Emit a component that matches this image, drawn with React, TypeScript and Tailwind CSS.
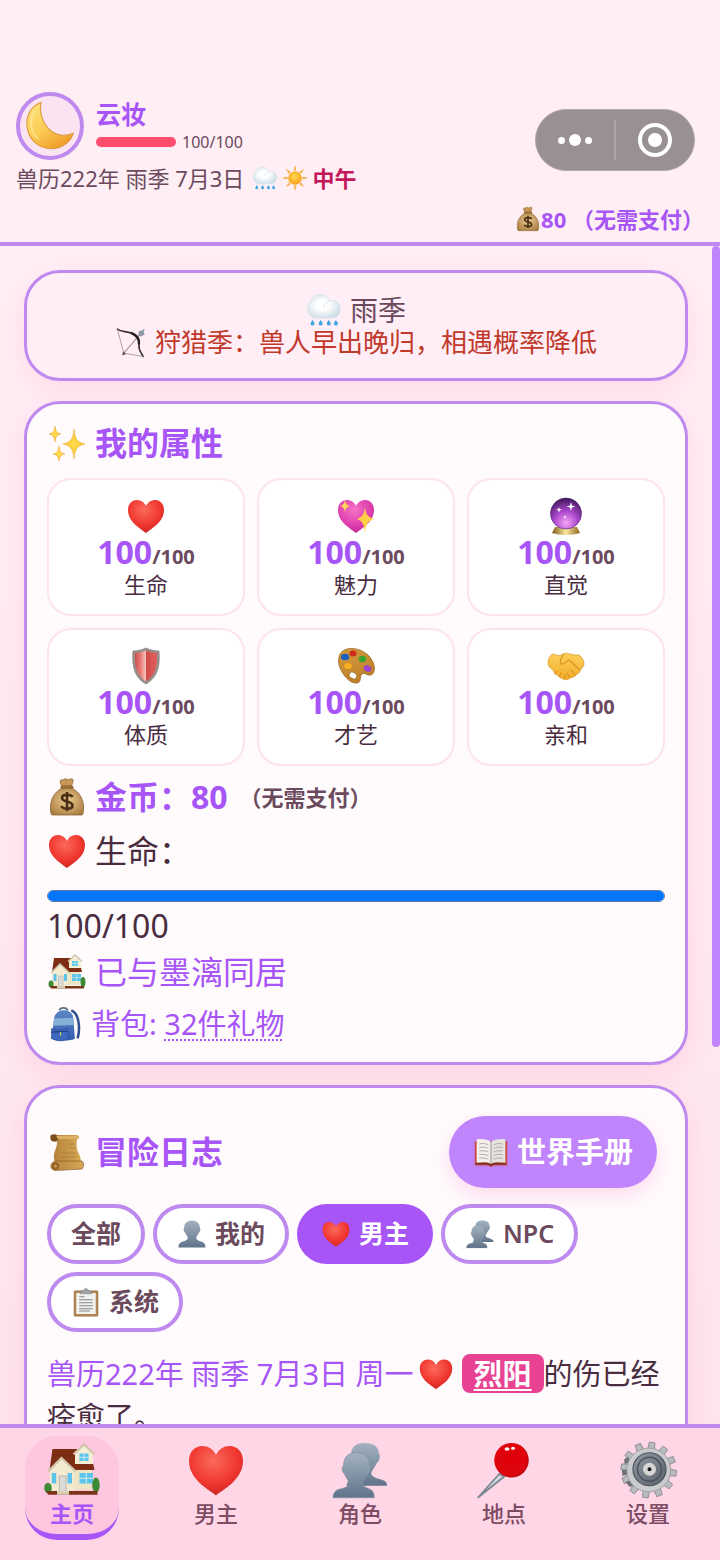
import { useState } from 'react';
import type { ReactNode } from 'react';

type IconName =
  | 'moon' | 'rain' | 'sun' | 'money' | 'bow' | 'sparkles' | 'heart' | 'charm' | 'crystal'
  | 'shield' | 'palette' | 'handshake' | 'house' | 'backpack' | 'scroll' | 'book'
  | 'person' | 'people' | 'clipboard' | 'pin' | 'gear';

const GEAR_TEETH = [0, 30, 60, 90, 120, 150, 180, 210, 240, 270, 300, 330];

// All drawings share a 40x40 box
const drawings: Record<IconName, ReactNode> = {
  moon: (
    <>
      <path d="M13 2C5 5 1 13 2.500 21.500C4 31.500 12.500 38 22 37.500C30 37 36 32 38 25.500C30 29 22 26.500 17.500 20.500C13.500 15 12 8 13 2Z" fill="url(#g-moon)" stroke="#d99a3c" strokeWidth="0.800" />
      <path d="M8 9C4 16 5 25 11 30" fill="none" stroke="#fff3b0" strokeWidth="1.500" opacity="0.500" strokeLinecap="round" />
    </>
  ),
  rain: (
    <>
      <path d="M12 29C6 29 2 25 2 19C2 15 3 12 5 10C7 5 11 3 16 3C22 3 25 6 26 10C33 8 38 12 38 19C38 25 34 29 28 29Z" fill="url(#g-cloud)" stroke="#d3dfe6" strokeWidth="0.700" />
      <path d="M26 10C22 11 20 14 20 17" fill="none" stroke="#cfdce4" strokeWidth="1" />
      <g fill="#3ea6e0">
        <path d="M7 31C9 33 9.500 34 9.500 35.500A2.300 2.300 0 0 1 5 35.500C5 34 6 33 7 31Z" />
        <path d="M16 31C18 33 18.500 34 18.500 35.500A2.300 2.300 0 0 1 14 35.500C14 34 15 33 16 31Z" />
        <path d="M25 31C27 33 27.500 34 27.500 35.500A2.300 2.300 0 0 1 23 35.500C23 34 24 33 25 31Z" />
        <path d="M33 31C35 33 35.500 34 35.500 35.500A2.300 2.300 0 0 1 31 35.500C31 34 32 33 33 31Z" />
      </g>
    </>
  ),
  sun: (
    <>
      {[0, 45, 90, 135, 180, 225, 270, 315].map((a) => (
        <path key={a} d="M20 1.500L21.500 8H18.500Z" fill="#f2a93b" stroke="#f2a93b" strokeWidth="0.800" transform={`rotate(${a} 20 20)`} />
      ))}
      <circle cx="20" cy="20" r="10.500" fill="url(#g-sun)" />
    </>
  ),
  money: (
    <>
      <path d="M15 9C12 5 13 2 16 3C18 1 20 2 21 3C24 1 27 2 26 4C26 6 25 7 24.500 9Z" fill="#c69757" stroke="#8b6231" strokeWidth="0.800" />
      <path d="M15 11C8 15 4 21 3.500 29C3.500 33 3.500 37 5 38H35C36.500 37 36.500 33 36.500 29C36 21 32 15 25 11Z" fill="url(#g-bag)" stroke="#8b6231" strokeWidth="0.800" />
      <rect x="13.500" y="8.500" width="13" height="3.500" rx="1.700" fill="#9c6e37" />
      <path d="M25.500 20C24.500 17.500 15 16.500 15 21C15 25.500 25.500 23.500 25.500 28.500C25.500 33 15.500 32.500 14.500 29M20 15V34" fill="none" stroke="#4a3014" strokeWidth="2.600" />
    </>
  ),
  bow: (
    <>
      <path d="M3 4C8 8 14 6 21 9C29 12 31 18 30 24C29 30 33 33 35 38" fill="none" stroke="#3b302e" strokeWidth="2" strokeLinecap="round" />
      <path d="M3 4L11 34L35 38" fill="none" stroke="#8b8583" strokeWidth="0.900" />
      <path d="M11 34L34 7" stroke="#7b6d68" strokeWidth="1.200" />
      <path d="M29 12L30 6L33 6L37 3L36 8L37 11L32 13Z" fill="#909aa5" />
      <path d="M9 37L10 32L14 35Z" fill="#58504d" />
      <path d="M20 8.500C27 11 31 17 30 23" fill="none" stroke="#201b1a" strokeWidth="3" />
    </>
  ),
  sparkles: (
    <g fill="url(#g-spark)" stroke="#eaa531" strokeWidth="0.500">
      <path d="M27 6C28 16 30 19 38 21C30 23 28 26 27 36C26 26 24 23 16 21C24 19 26 16 27 6Z" />
      <path d="M8 3C9 9 10 10 14 11C10 12 9 13 8 19C7 13 6 12 2 11C6 10 7 9 8 3Z" />
      <path d="M12 23C13 29 14 30 18 31C14 32 13 33 12 38C11 33 10 32 6 31C10 30 11 29 12 23Z" />
    </g>
  ),
  heart: (
    <path d="M20 37C17 34 2 27 2 14C2 2 16 1 20 10C24 1 38 2 38 14C38 27 23 34 20 37Z" fill="url(#g-heart)" />
  ),
  charm: (
    <>
      <path d="M20 37C17 34 2 27 2 14C2 2 16 1 20 10C24 1 38 2 38 14C38 27 23 34 20 37Z" fill="url(#g-pink)" />
      <path d="M9 3.500C9.500 8 11 9 14 10C11 11 9.500 12 9 16.500C8.500 12 7 11 4 10C7 9 8.500 8 9 3.500Z" fill="#ffd45a" />
      <path d="M29 11C30 19 32 21 38 23C32 25 30 27 29 37C28 27 26 25 21 23C26 21 28 19 29 11Z" fill="#ffcf45" />
    </>
  ),
  crystal: (
    <>
      <path d="M9 31H31L34 37C27 39.500 13 39.500 6 37Z" fill="url(#g-gold)" />
      <circle cx="20" cy="17.500" r="15.500" fill="url(#g-crystal)" stroke="#4b1c6a" strokeWidth="0.600" />
      <path d="M25 6L26 9.500L29.500 10.500L26 11.500L25 15L24 11.500L20.500 10.500L24 9.500Z" fill="#ffffff" />
      <path d="M13 11L13.700 13L16 13.700L13.700 14.400L13 16.500L12.300 14.400L10 13.700L12.300 13Z" fill="#ffffff" />
      <circle cx="19" cy="21" r="1" fill="#ffffff" />
    </>
  ),
  shield: (
    <>
      <path d="M20 2C16 4 11 5 7 5C6 17 7 31 20 38C33 31 34 17 33 5C29 5 24 4 20 2Z" fill="#96908e" stroke="#7a7472" strokeWidth="0.600" />
      <path d="M20 4.500C16 6 12.500 7 9 7C8.500 18 9.500 29 20 35.500Z" fill="url(#g-shieldl)" />
      <path d="M20 4.500C24 6 27.500 7 31 7C31.500 18 30.500 29 20 35.500Z" fill="url(#g-shieldr)" />
    </>
  ),
  palette: (
    <>
      <path d="M4 8C9 0 23 1 32 9C40 17 40 27 35 29C31 30 29 26 26 28C23 31 26 36 21 37C14 38 7 29 4 22C2 17 2 12 4 8Z" fill="url(#g-palette)" stroke="#8f5c14" strokeWidth="0.700" />
      <ellipse cx="17" cy="29.500" rx="4.200" ry="3.200" fill="#ffffff" stroke="#8f5c14" strokeWidth="0.700" transform="rotate(35 17 29.500)" />
      <ellipse cx="9" cy="11" rx="4.200" ry="3.200" fill="#1e5fc0" />
      <ellipse cx="17" cy="7.500" rx="3.400" ry="3" fill="#cf2a1e" />
      <ellipse cx="26.500" cy="13" rx="3.600" ry="3.200" fill="#37a22c" />
      <ellipse cx="12" cy="20" rx="3.800" ry="3" fill="#f5b01e" />
      <ellipse cx="31.500" cy="22.500" rx="4" ry="3.200" fill="#9b45cc" transform="rotate(30 31.500 22.500)" />
    </>
  ),
  handshake: (
    <g stroke="#d9951f" strokeWidth="0.700" strokeLinejoin="round">
      <path d="M2 16C3 11 5 8 8 8C11 10 14 10 17 8C19 7 22 7 24 8C27 9 30 9 33 9C36 11 38 15 38 18C38 21 35 22 34 25C33 28 30 28 29 30C27 32 25 31 24 32C22 34 20 34 18 33C16 33 14 32 13 30C10 29 8 27 7 24C4 22 2 20 2 16Z" fill="url(#g-hand)" />
      <path d="M18 8C15 12 13 15 15 18C18 19 20 15 23 14C27 18 31 21 34 24" fill="none" strokeWidth="1.200" />
      <path d="M11 25L9 28M15 27L13 31M19 29L18 33M25 24L29 29M21 27L24 31" fill="none" strokeWidth="1.200" strokeLinecap="round" />
    </g>
  ),
  house: (
    <>
      <path d="M8 33V19L16 10H33V33Z" fill="#eee5c4" />
      <path d="M7 6H32L35 20H20L13 12L5 20Z" fill="#7d2d14" />
      <path d="M5 20L13 12L21 20V34H5Z" fill="#f3ead0" />
      <path d="M4 21L13 12L22.500 21" fill="none" stroke="#cfc6ad" strokeWidth="1.500" />
      <path d="M22 9L28 3.500L34 9V16H22Z" fill="#f5edd5" />
      <path d="M21 9.500L28 3L35 9.500" fill="none" stroke="#cfc6ad" strokeWidth="1.400" />
      <g fill="#5cc4e8">
        <rect x="25" y="9" width="6" height="5" />
        <rect x="25" y="22" width="9" height="7" />
        <rect x="6.500" y="22" width="3" height="7" />
        <rect x="17" y="22" width="3" height="7" />
      </g>
      <path d="M28 9V14M25 11.500H31M29.500 22V29M25 25.500H34" stroke="#d8f0f2" strokeWidth="0.600" />
      <rect x="11.500" y="24" width="4.500" height="11" fill="#dcdad6" stroke="#b5b2aa" strokeWidth="0.600" />
      <ellipse cx="4" cy="32" rx="2.500" ry="3.500" fill="#3d8a35" />
      <ellipse cx="36" cy="30" rx="2.500" ry="5" fill="#3d8a35" />
      <path d="M3 34H37V36.500H4Z" fill="#7b3418" />
      <rect x="10" y="34" width="8" height="2.500" fill="#d9cdb4" />
    </>
  ),
  backpack: (
    <>
      <path d="M27 5C36 8 37 26 34 36" fill="none" stroke="#324f8e" strokeWidth="2.800" />
      <path d="M14 5C14 1 22 1 23 5" fill="none" stroke="#5c7188" strokeWidth="2" />
      <path d="M8 13C10 2 27 2 29 12L31 36C28 39 10 39 5 36Z" fill="url(#g-pack)" />
      <path d="M8 14L29 13L30 21L7 22Z" fill="#86afd6" />
      <path d="M5 25C13 28 18 27 23 24L24 36C18 40 10 39 5 36Z" fill="#3e68bd" stroke="#294a8e" strokeWidth="0.700" />
      <path d="M5 29L23 28" stroke="#23407c" strokeWidth="1.200" />
      <path d="M15 29V33" stroke="#e2c368" strokeWidth="1.200" />
    </>
  ),
  scroll: (
    <>
      <path d="M6 3H31C29 10 29 17 32 22C34 26 34 29 33 31H9C4 25 9 18 10 12C10 9 9 6 6 5Z" fill="url(#g-scroll)" />
      <path d="M4 3C8 1 11 3 11 6C11 9 8 11 5 9C3 8 3 4 4 3Z" fill="#77501d" />
      <path d="M9 4H32V7H11Z" fill="#dcb065" />
      <path d="M8 29H35C37 31 37 35 35 37L8 38.500C2 37 3 31 8 29Z" fill="url(#g-scroll)" stroke="#8a5f24" strokeWidth="0.700" />
      <circle cx="8.500" cy="34" r="3.600" fill="#8f6124" />
      <circle cx="8.500" cy="34" r="1.600" fill="#cf9f50" />
      <path d="M22 12H27M22 16H28M14 21H29M15 25H29" stroke="#a6783a" strokeWidth="0.700" />
    </>
  ),
  book: (
    <>
      <path d="M2 8H38V35H23C22 37 18 37 17 35H2Z" fill="#c9473a" />
      <path d="M3 32H18C19 34 21 34 22 32H37V34H23L20 35.500L17 34H3Z" fill="#6f3028" />
      <path d="M4 6C10 5 17 6 20 9V33C16 31 10 31 4 32Z" fill="#f2efec" />
      <path d="M36 6C30 5 23 6 20 9V33C24 31 30 31 36 32Z" fill="#e6e2de" />
      <path d="M20 9V33" stroke="#a19b96" strokeWidth="1.200" />
      <path d="M7 11C11 10 15 11 17 12M7 15C11 14 15 15 17 16M7 19C11 18 15 19 17 20M7 23C11 22 15 23 17 24M7 27C11 26 15 27 17 28M33 11C29 10 25 11 23 12M33 15C29 14 25 15 23 16M33 19C29 18 25 19 23 20M33 23C29 22 25 23 23 24M33 27C29 26 25 27 23 28" fill="none" stroke="#aaa5a0" strokeWidth="1" />
    </>
  ),
  person: (
    <path d="M20 2C27 2 30.500 6 30.500 12C32 13 31 17 29.500 18C28 21 26 23 25.500 25C26 28 29 29 32 30C36 31 38 33 38 38H2C2 33 4 31 8 30C11 29 14 28 14.500 25C14 23 12 21 10.500 18C9 17 8 13 9.500 12C9.500 6 13 2 20 2Z" fill="url(#g-person)" />
  ),
  people: (
    <>
      <path d="M23 2C29 2 32.500 4.500 32.500 9C34 10 33 14 31.500 15C30 18 28 20 27.500 22C27.500 25 32 25.500 34.500 26.500C37 27.500 38 28 38 30.500H11C11 28 14 26 17 25L14 10C14 5 17 2 23 2Z" fill="url(#g-person)" />
      <path d="M17.500 8.500C23 8.500 26.500 11.500 26.500 17C28 18 27 21.500 25.500 22.500C24 25.500 22 27 22 29C22 31.500 25 32 27 33C29 34 29.500 36 29.500 38.500H2C2 36 3 34 5.500 33C9 32 12.500 31.500 12.500 29C12.500 27 11 25.500 9.500 22.500C8 21.500 7.500 18 9 17C9 11.500 12 8.500 17.500 8.500Z" fill="url(#g-person)" stroke="#7b8d9f" strokeWidth="0.400" />
    </>
  ),
  clipboard: (
    <>
      <rect x="4" y="5" width="32" height="34" rx="1.500" fill="#b38653" stroke="#8a6338" strokeWidth="0.600" />
      <rect x="7" y="8" width="26" height="28" fill="#f1f1ef" />
      <path d="M12 9L14 5H17C17 1 23 1 23 5H26L28 9Z" fill="#9da3a6" stroke="#73797c" strokeWidth="0.600" />
      <path d="M11 13H18M11 17H29M11 21H29M11 25H29M11 29H29M11 32H25" stroke="#7d8285" strokeWidth="1.300" />
    </>
  ),
  pin: (
    <>
      <path d="M17 22.500L2.500 38.500L20 24.500Z" fill="#d2d7dc" stroke="#7b8794" strokeWidth="1.200" />
      <circle cx="25" cy="13.500" r="11.500" fill="url(#g-pin)" />
      <ellipse cx="22" cy="6" rx="1.600" ry="1.200" fill="#ffffff" />
      <ellipse cx="26" cy="5.500" rx="1.300" ry="1" fill="#ffffff" />
    </>
  ),
  gear: (
    <>
      {GEAR_TEETH.map((a) => (
        <path key={a} d="M17.800 7L18.300 1.500H22L22.500 7Z" fill="#b9bbbd" stroke="#8a8d90" strokeWidth="0.600" transform={`rotate(${a + 8} 20.500 20)`} />
      ))}
      <path d="M4 13L7 11L8 15L4.500 16ZM2.500 20L6 19.500L6.500 23L3 24ZM5 28L8.500 26.500L10.500 30L8 31.500Z" fill="#6f7275" />
      <circle cx="20.500" cy="20" r="14.600" fill="#c9cbcc" stroke="#9b9da0" strokeWidth="0.600" />
      <circle cx="21" cy="19.500" r="11" fill="url(#g-gear)" stroke="#4d555f" strokeWidth="0.800" />
      <circle cx="21" cy="19.500" r="8" fill="none" stroke="#4a525c" strokeWidth="1" />
      <circle cx="21" cy="19.500" r="4.300" fill="#d6d6d3" />
      <circle cx="21" cy="19.500" r="1.300" fill="#16181b" />
    </>
  ),
};

function IconDefs() {
  return (
    <svg className="absolute size-0" aria-hidden="true">
      <defs>
        <linearGradient id="g-moon" x1="0" y1="0" x2="0.600" y2="1">
          <stop offset="0" stopColor="#ffe680" />
          <stop offset="0.600" stopColor="#fbcb55" />
          <stop offset="1" stopColor="#f0a02c" />
        </linearGradient>
        <radialGradient id="g-cloud" cx="0.450" cy="0.450" r="0.650">
          <stop offset="0.300" stopColor="#ffffff" />
          <stop offset="1" stopColor="#c6d9e4" />
        </radialGradient>
        <radialGradient id="g-sun" cx="0.450" cy="0.400" r="0.650">
          <stop offset="0" stopColor="#ffd84d" />
          <stop offset="1" stopColor="#f79b1b" />
        </radialGradient>
        <radialGradient id="g-bag" cx="0.500" cy="0.450" r="0.650">
          <stop offset="0" stopColor="#eccb92" />
          <stop offset="1" stopColor="#a87b3e" />
        </radialGradient>
        <radialGradient id="g-spark">
          <stop offset="0" stopColor="#ffdc4a" />
          <stop offset="1" stopColor="#f9c33b" />
        </radialGradient>
        <radialGradient id="g-heart" cx="0.450" cy="0.300" r="0.750">
          <stop offset="0" stopColor="#fb6a5c" />
          <stop offset="0.600" stopColor="#f0372f" />
          <stop offset="1" stopColor="#c9221f" />
        </radialGradient>
        <radialGradient id="g-pink" cx="0.450" cy="0.300" r="0.750">
          <stop offset="0" stopColor="#f574c6" />
          <stop offset="0.600" stopColor="#e03fae" />
          <stop offset="1" stopColor="#b82793" />
        </radialGradient>
        <linearGradient id="g-gold" x1="0" x2="1">
          <stop offset="0" stopColor="#7d5b18" />
          <stop offset="0.500" stopColor="#fbe6a0" />
          <stop offset="1" stopColor="#8c6519" />
        </linearGradient>
        <radialGradient id="g-crystal" cx="0.500" cy="0.800" r="0.800">
          <stop offset="0" stopColor="#f3a6f5" />
          <stop offset="0.450" stopColor="#b14ad2" />
          <stop offset="1" stopColor="#3e1559" />
        </radialGradient>
        <linearGradient id="g-shieldl" x1="0" x2="1">
          <stop offset="0" stopColor="#c94f4d" />
          <stop offset="0.500" stopColor="#ea7a75" />
          <stop offset="1" stopColor="#fbc7c0" />
        </linearGradient>
        <linearGradient id="g-shieldr" x1="0" x2="1">
          <stop offset="0" stopColor="#cf4a49" />
          <stop offset="1" stopColor="#e2605c" />
        </linearGradient>
        <linearGradient id="g-palette" x1="0" y1="0" x2="0.500" y2="1">
          <stop offset="0" stopColor="#d49a3f" />
          <stop offset="1" stopColor="#bf8128" />
        </linearGradient>
        <linearGradient id="g-hand" x1="0" y1="0" x2="0" y2="1">
          <stop offset="0" stopColor="#ffcf5a" />
          <stop offset="1" stopColor="#f2ab2b" />
        </linearGradient>
        <linearGradient id="g-pack" x1="0" y1="0" x2="0" y2="1">
          <stop offset="0" stopColor="#5d86c8" />
          <stop offset="1" stopColor="#345cb0" />
        </linearGradient>
        <linearGradient id="g-scroll" x1="0" y1="0" x2="1" y2="0">
          <stop offset="0" stopColor="#b5823a" />
          <stop offset="1" stopColor="#d6a757" />
        </linearGradient>
        <linearGradient id="g-person" x1="0" y1="0" x2="0" y2="1">
          <stop offset="0" stopColor="#a3b2c0" />
          <stop offset="1" stopColor="#60748a" />
        </linearGradient>
        <radialGradient id="g-pin" cx="0.450" cy="0.450" r="0.600">
          <stop offset="0" stopColor="#dd0008" />
          <stop offset="0.750" stopColor="#e0040f" />
          <stop offset="1" stopColor="#b5000c" />
        </radialGradient>
        <linearGradient id="g-gear" x1="0" y1="0" x2="1" y2="1">
          <stop offset="0" stopColor="#9299a2" />
          <stop offset="1" stopColor="#596069" />
        </linearGradient>
      </defs>
    </svg>
  );
}

function Icon({ name, className }: { name: IconName; className: string }) {
  return (
    <svg viewBox="0 0 40 40" className={`shrink-0 ${className}`} aria-hidden="true">
      {drawings[name]}
    </svg>
  );
}

const stats: { icon: IconName; value: number; label: string }[] = [
  { icon: 'heart', value: 100, label: '生命' },
  { icon: 'charm', value: 100, label: '魅力' },
  { icon: 'crystal', value: 100, label: '直觉' },
  { icon: 'shield', value: 100, label: '体质' },
  { icon: 'palette', value: 100, label: '才艺' },
  { icon: 'handshake', value: 100, label: '亲和' },
];

const filters: { icon?: IconName; label: string }[] = [
  { label: '全部' },
  { icon: 'person', label: '我的' },
  { icon: 'heart', label: '男主' },
  { icon: 'people', label: 'NPC' },
  { icon: 'clipboard', label: '系统' },
];

const tabs: { icon: IconName; label: string }[] = [
  { icon: 'house', label: '主页' },
  { icon: 'heart', label: '男主' },
  { icon: 'people', label: '角色' },
  { icon: 'pin', label: '地点' },
  { icon: 'gear', label: '设置' },
];

function Header() {
  return (
    <header className="shrink-0 border-b-4 border-[#be8aef] bg-[#ffeef3] px-4 pt-[92px]">
      <div className="flex items-start justify-between">
        <div>
          <div className="flex items-center gap-3">
            <div className="flex size-[68px] items-center justify-center rounded-full border-4 border-[#be8aef] bg-[#fce3f2]">
              <Icon name="moon" className="size-[52px]" />
            </div>
            <div>
              <div className="text-[25px] leading-8 font-bold text-[#a855f7]">云妆</div>
              <div className="flex items-center gap-[6px]">
                <div className="h-[10px] w-20 rounded-full bg-[#ff4d6d]" />
                <span className="text-base leading-6 text-[#6b4a5e]">100/100</span>
              </div>
            </div>
          </div>
          <div className="flex items-center gap-1 text-[22px] leading-9 text-[#6b4a5e]">
            <span className="mr-1">兽历222年 雨季 7月3日</span>
            <Icon name="rain" className="size-[26px]" />
            <Icon name="sun" className="size-[26px]" />
            <span className="font-bold text-[#c2185b]">中午</span>
          </div>
        </div>

        <div className="mt-[17px] mr-[9px] flex h-[62px] w-40 items-center rounded-full border border-[#b3a8ac] bg-[#999093]">
          <button aria-label="更多" className="flex flex-1 items-center justify-center gap-1">
            <span className="size-[7px] rounded-full bg-white" />
            <span className="size-3 rounded-full bg-white" />
            <span className="size-[7px] rounded-full bg-white" />
          </button>
          <span className="h-10 w-[2px] bg-[#ada5a8]" />
          <button aria-label="关闭" className="flex flex-1 items-center justify-center">
            <span className="flex size-[34px] items-center justify-center rounded-full border-4 border-white">
              <span className="size-[14px] rounded-full bg-white" />
            </span>
          </button>
        </div>
      </div>
      <div className="flex items-center justify-end text-[22px] leading-[46px] font-bold text-[#a855f7]">
        <Icon name="money" className="size-[26px]" />
        <span>80 （无需支付）</span>
      </div>
    </header>
  );
}

function Card({ children }: { children: ReactNode }) {
  return (
    <section className="rounded-[36px] border-3 border-[#be8aef] bg-[#fffbfd] p-5 shadow-[0_8px_24px_rgba(255,105,180,0.14)]">
      {children}
    </section>
  );
}

function Attributes() {
  return (
    <Card>
      <h2 className="flex items-center gap-2 text-[32px] leading-[38px] font-bold text-[#a855f7]">
        <Icon name="sparkles" className="-my-1 size-10" />
        我的属性
      </h2>
      <div className="mt-4 grid grid-cols-3 gap-3">
        {stats.map((stat) => (
          <div key={stat.label} className="flex flex-col items-center rounded-3xl border-2 border-[#fde4ec] bg-white py-4">
            <Icon name={stat.icon} className="-mb-0.5 size-10" />
            <div className="text-[32px] leading-9 font-bold text-[#a855f7]">
              {stat.value}
              <span className="text-xl leading-none text-[#6b4a5e]">/100</span>
            </div>
            <div className="text-[22px] leading-7 text-[#4a2c40]">{stat.label}</div>
          </div>
        ))}
      </div>
      <div className="mt-2 flex items-center text-[32px] leading-[46px] font-bold text-[#a855f7]">
        <Icon name="money" className="mr-2 size-10" />
        金币：80
        <span className="ml-3 text-[22px] text-[#6b4a5e]">（无需支付）</span>
      </div>
      <label htmlFor="life" className="mt-2 flex items-center gap-2 text-[32px] leading-[46px] text-[#4a2c40]">
        <Icon name="heart" className="size-10" />
        生命：
      </label>
      <progress
        id="life"
        value={100}
        max={100}
        className="mt-4 block h-3 w-full appearance-none overflow-hidden rounded-full border border-[#5f7fa8] [&::-webkit-progress-bar]:bg-[#efefef] [&::-webkit-progress-value]:bg-[#0075ff]"
      />
      <div className="text-[32px] leading-[48px] text-[#4a2c40]">100/100</div>
      <div className="flex items-center gap-2 text-[32px] leading-[44px] text-[#a855f7]">
        <Icon name="house" className="size-10" />
        已与墨漓同居
      </div>
      <div className="mt-3 flex items-center text-[29px] leading-9 text-[#a855f7]">
        <Icon name="backpack" className="mr-2 size-9" />
        <span className="whitespace-pre">背包: </span>
        <a href="#bag" className="underline decoration-dotted decoration-2 underline-offset-4">32件礼物</a>
      </div>
    </Card>
  );
}

function AdventureLog() {
  const [active, setActive] = useState('男主');

  return (
    <Card>
      <div className="flex items-center justify-between">
        <h2 className="flex items-center gap-2 text-[32px] leading-[38px] font-bold text-[#a855f7]">
          <Icon name="scroll" className="-my-1 size-10" />
          冒险日志
        </h2>
        <button className="m-2 flex h-[72px] items-center gap-2 rounded-full bg-[#c084fc] px-6 text-[29px] font-bold text-white shadow-[0_8px_20px_rgba(255,105,180,0.22)]">
          <Icon name="book" className="size-9" />
          世界手册
        </button>
      </div>
      <div className="mt-2 flex flex-wrap gap-2">
        {filters.map((filter) => (
          <button
            key={filter.label}
            onClick={() => setActive(filter.label)}
            className={`flex h-[60px] items-center gap-2 rounded-full border-4 px-5 text-[25px] font-semibold ${active === filter.label
              ? 'border-[#a855f7] bg-[#a855f7] text-white'
              : 'border-[#be8aef] bg-white text-[#6b4a5e]'
            }`}
          >
            {filter.icon && <Icon name={filter.icon} className="size-[30px]" />}
            {filter.label}
          </button>
        ))}
      </div>
      <p className="mt-5 text-[29px] leading-[43px] text-[#4a2c40]">
        <span className="text-[#a855f7]">兽历222年 雨季 7月3日 周一</span>
        <Icon name="heart" className="mr-2 ml-1 inline-block size-9 align-[-7px]" />
        <a href="#lieyang" className="rounded-lg bg-[#e84393] px-3 font-bold text-white underline decoration-2 underline-offset-4">烈阳</a>
        的伤已经痊愈了。
      </p>
    </Card>
  );
}

function TabBar() {
  const [current, setCurrent] = useState('主页');

  return (
    <nav className="flex shrink-0 border-t-4 border-[#be8aef] bg-[#ffd6e6] pt-2 pb-5">
      {tabs.map((tab) => (
        <div key={tab.label} className="flex flex-1 justify-center">
          <button
            onClick={() => setCurrent(tab.label)}
            className={`flex h-[104px] w-[94px] flex-col items-center rounded-[32px] border-b-6 pt-1 text-[22px] leading-[26px] ${current === tab.label
              ? 'border-[#a855f7] bg-[#ffc6e0] font-bold text-[#a855f7]'
              : 'border-transparent font-medium text-[#7d4b62]'
            }`}
          >
            <Icon name={tab.icon} className="size-[60px]" />
            {tab.label}
          </button>
        </div>
      ))}
    </nav>
  );
}

export default function App() {
  return (
    <div className="flex h-screen flex-col bg-[#ffe9f0] font-['Noto_Sans','Noto_Sans_CJK_SC',sans-serif]">
      <IconDefs />
      <Header />
      <div className="flex min-h-0 flex-1 bg-linear-to-b from-[#ffeef5] to-[#fee4eb]">
        <main className="flex min-w-0 flex-1 flex-col gap-5 overflow-hidden p-6">
          <section className="shrink-0 rounded-[36px] border-3 border-[#be8aef] bg-[#ffeef5] pt-[21px] pb-5 text-center shadow-[0_8px_24px_rgba(255,105,180,0.14)]">
            <div className="flex items-center justify-center gap-2 text-[28px] leading-8 text-[#6b4a5e]">
              <Icon name="rain" className="-my-1 size-9" />
              雨季
            </div>
            <div className="flex items-center justify-center gap-2 text-[26px] leading-8 text-[#c0392b]">
              <Icon name="bow" className="size-8" />
              狩猎季：兽人早出晚归，相遇概率降低
            </div>
          </section>
          <Attributes />
          <AdventureLog />
        </main>
        <div className="w-2">
          <div className="h-[68%] rounded-full bg-[#c084fc]" />
        </div>
      </div>
      <TabBar />
    </div>
  );
}
